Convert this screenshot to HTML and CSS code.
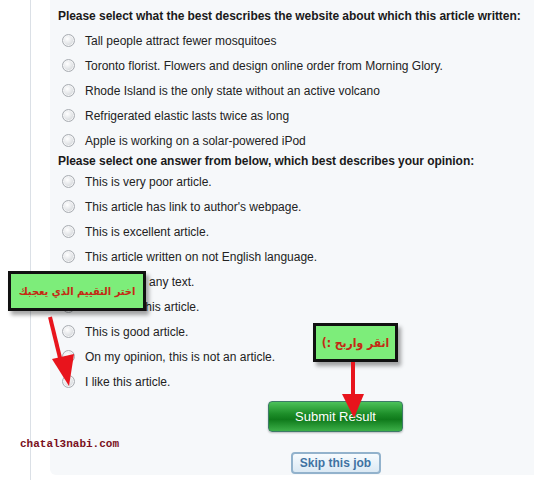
FILE: index.html
```html
<!DOCTYPE html>
<html>
<head>
    <meta charset="utf-8">
    <link rel="stylesheet" href="styles.css">
</head>
<body>
    <div class="page">
        <div class="panel">
            <div class="question">Please select what the best describes the website about which this article written:</div>
            <ul class="answers">
                <li><input type="radio" name="site"> Tall people attract fewer mosquitoes</li>
                <li><input type="radio" name="site"> Toronto florist. Flowers and design online order from Morning Glory.</li>
                <li><input type="radio" name="site"> Rhode Island is the only state without an active volcano</li>
                <li><input type="radio" name="site"> Refrigerated elastic lasts twice as long</li>
                <li><input type="radio" name="site"> Apple is working on a solar-powered iPod</li>
            </ul>
            <div class="question second">Please select one answer from below, which best describes your opinion:</div>
            <ul class="answers">
                <li><input type="radio" name="opinion"> This is very poor article.</li>
                <li><input type="radio" name="opinion"> This article has link to author's webpage.</li>
                <li><input type="radio" name="opinion"> This is excellent article.</li>
                <li><input type="radio" name="opinion"> This article written on not English language.</li>
                <li><input type="radio" name="opinion"> Not contain any text.</li>
                <li><input type="radio" name="opinion"> I don't like this article.</li>
                <li><input type="radio" name="opinion"> This is good article.</li>
                <li><input type="radio" name="opinion"> On my opinion, this is not an article.</li>
                <li><input type="radio" name="opinion"> I like this article.</li>
            </ul>
            <div class="actions">
                <button class="submitButton">Submit Result</button>
                <button class="skipButton">Skip this job</button>
            </div>
        </div>

        <!-- annotations drawn over the form -->
        <div class="note noteRate" dir="rtl">اختر التقييم الذي يعجبك</div>
        <div class="note noteWin" dir="rtl">انقر واربح :)</div>
        <svg class="arrows" width="534" height="480" viewBox="0 0 534 480">
            <line x1="50" y1="317" x2="61" y2="362" stroke="#e8141c" stroke-width="4"/>
            <polygon points="52,359 74,354 69,386" fill="#e8141c"/>
            <line x1="353" y1="362" x2="353" y2="396" stroke="#e8141c" stroke-width="4"/>
            <polygon points="342,394 364,394 354,418" fill="#e8141c"/>
        </svg>
        <div class="watermark">chatal3nabi.com</div>
    </div>
</body>
</html>
```

FILE: styles.css
```css
html, body {
    margin: 0;
    padding: 0;
    background-color: white;
    overflow: hidden;
}

.page {
    position: relative;
    height: 480px;
    margin-left: 30px;
    padding-left: 19px;
    border-left: 1px solid #dbe0e6;
    font-family: "Liberation Sans", Arial, sans-serif;
    color: #1a1a1a;
}

.panel {
    background-color: #f6f8fa;
    padding: 4px 0 1px 8px;
    border-bottom-left-radius: 6px;
}

.question {
    font-size: 12px;
    font-weight: bold;
    letter-spacing: -0.05px;
    line-height: 24px;
    white-space: nowrap;
}

.question.second {
    line-height: 16px;
}

.answers {
    list-style: none;
    margin: 0;
    padding: 0;
}

.answers li {
    display: flex;
    align-items: center;
    height: 25px;
    font-size: 12px;
    white-space: nowrap;
    color: #222;
}

input[type="radio"] {
    appearance: none;
    -webkit-appearance: none;
    width: 13px;
    height: 13px;
    margin: 0 10px 0 4px;
    border-radius: 50%;
    border: 1px solid #a9adb2;
    background: radial-gradient(circle at 40% 35%, #ffffff 0%, #e6e8ea 45%, #c4c7cb 100%);
    box-shadow: inset 0 0 0 1px #f4f5f6;
}

.actions {
    display: flex;
    flex-direction: column;
    align-items: center;
    width: 135px;
    margin: 7px 0 0 210px;
}

.submitButton {
    width: 135px;
    height: 31px;
    border: 1px solid #3d7a68;
    border-radius: 4px;
    background: linear-gradient(to bottom, #4cc25a 0%, #1e8f2a 40%, #0f7a1b 60%, #3caf48 100%);
    color: white;
    font-family: "Liberation Sans", Arial, sans-serif;
    font-size: 13px;
    box-shadow: 0 1px 2px rgba(0, 0, 0, 0.25);
}

.skipButton {
    width: 90px;
    height: 22px;
    margin-top: 20px;
    border: 2px solid #92b2cc;
    border-radius: 4px;
    background: linear-gradient(to bottom, #f7fbfe 0%, #dbe9f4 100%);
    color: #3f72a2;
    font-family: "Liberation Sans", Arial, sans-serif;
    font-size: 12px;
    font-weight: bold;
    padding: 0;
}

.note {
    position: absolute;
    box-sizing: border-box;
    display: flex;
    align-items: center;
    justify-content: center;
    background-color: #7ded7a;
    border: 3px solid #111;
    box-shadow: 3px 4px 4px rgba(0, 0, 0, 0.35);
    color: #c42a14;
    font-family: "DejaVu Sans Condensed", "DejaVu Sans", sans-serif;
    font-weight: bold;
    font-size: 11px;
    white-space: nowrap;
}

.noteRate {
    left: -23px;
    top: 271px;
    width: 138px;
    height: 40px;
}

.noteWin {
    left: 282px;
    top: 323px;
    width: 85px;
    height: 39px;
    font-size: 12px;
}

.arrows {
    position: absolute;
    left: -31px;
    top: 0;
    pointer-events: none;
}

.watermark {
    position: absolute;
    left: -11px;
    top: 438px;
    font-family: "Liberation Mono", "Courier New", monospace;
    font-weight: bold;
    font-size: 11px;
    color: #7a1020;
}
```
